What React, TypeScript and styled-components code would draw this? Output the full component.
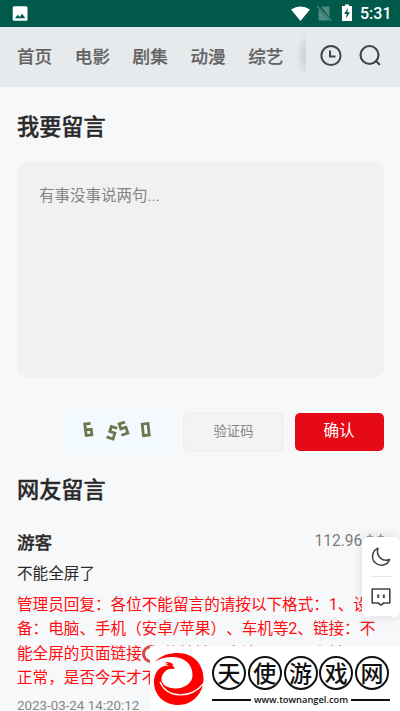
import React from "react";
import styled, { createGlobalStyle } from "styled-components";

const GlobalStyle = createGlobalStyle`
  * { box-sizing: border-box; }
  body { margin: 0; background: #f7f8fa; overflow: hidden; }
  button, textarea, input { font: inherit; }
`;

const Screen = styled.div`
  position: relative;
  width: 400px;
  height: 711px;
  overflow: hidden;
  background: #f7f8fa;
  color: #292929;
  font-family: Roboto, "Noto Sans CJK SC", sans-serif;
  text-spacing-trim: space-all;
`;

const StatusBar = styled.header`
  display: flex;
  align-items: center;
  height: 27px;
  padding: 0 9px 0 12px;
  background: #00594b;
  color: #fff;
`;

const StatusIcons = styled.div`
  display: flex;
  align-items: center;
  margin-left: auto;
  svg { display: block; }
`;

const Clock = styled.span`
  width: 31px;
  margin-left: 7px;
  font-size: 16px;
  font-weight: 500;
  line-height: 28px;
  white-space: nowrap;
`;

const NavBar = styled.nav`
  display: flex;
  align-items: center;
  height: 60px;
  padding-left: 17px;
  background: #e7eaed;
`;

const NavList = styled.div`
  display: flex;
  gap: 22.6px;
  width: 289px;
  height: 60px;
  overflow: hidden;
  background: radial-gradient(ellipse 10px 22px at 289px 28px, #cbced1, #e7eaed00) no-repeat;
`;

const NavItem = styled.a`
  flex: none;
  color: #626262;
  font-family: "Noto Sans CJK SC", sans-serif;
  font-size: 17.6px;
  font-weight: 500;
  line-height: 57px;
  white-space: nowrap;
  -webkit-text-stroke: 0.2px #626262;
`;

const NavTools = styled.div`
  display: flex;
  gap: 15px;
  margin: -4px 0 0 13px;
  svg { display: block; }
`;

const Content = styled.main`
  padding: 0 16px 0 17px;
`;

const Heading = styled.h2<{ $top: number }>`
  margin: ${(p) => p.$top}px 0 0;
  font-size: 22.2px;
  line-height: 32px;
  font-weight: 500;
  -webkit-text-stroke: 0.35px #292929;
`;

const MessageBox = styled.textarea`
  display: block;
  width: 367px;
  height: 215px;
  margin-top: 19px;
  padding: 22px 22px;
  border: 0;
  border-radius: 9px;
  resize: none;
  background: #f1f1f1;
  font-size: 15.5px;
  line-height: 24px;
  &::placeholder { color: #858585; }
`;

const FormRow = styled.div`
  display: flex;
  justify-content: flex-end;
  align-items: center;
  height: 40px;
  margin-top: 35px;
`;

const Captcha = styled.svg`
  width: 109px;
  height: 39px;
  background: #f2faff;
`;

const CodeInput = styled.input`
  width: 101px;
  height: 40px;
  margin: 0 11px;
  padding: 0 0 1px;
  border: 1px solid #eeeff0;
  border-radius: 6px;
  background: #f3f3f3;
  font-size: 13.3px;
  text-align: center;
  &::placeholder { color: #858585; }
`;

const Submit = styled.button`
  width: 89px;
  height: 38px;
  padding: 0 1px 6px 0;
  border: 0;
  border-radius: 5px;
  background: #e50a16;
  color: #fff;
  font-size: 15.6px;
`;

const CommentHead = styled.div`
  display: flex;
  justify-content: space-between;
  height: 26px;
  margin-top: 25px;
`;

const Author = styled.strong`
  font-size: 17.6px;
  line-height: 24px;
  font-weight: 500;
  -webkit-text-stroke: 0.3px #292929;
`;

const Address = styled.span`
  color: #7d7d7d;
  font-size: 15.6px;
  line-height: 20px;
`;

const CommentText = styled.p`
  margin: 5px 0 0;
  font-size: 15.6px;
  line-height: 25px;
`;

const Reply = styled.div`
  margin-top: 6px;
  color: #ff0b10;
  font-size: 15.6px;
  line-height: 24.4px;
`;

const ReplyLine = styled.div`
  display: flex;
  align-items: center;
  height: 24.4px;
  white-space: pre;
`;

const Ring = styled.i`
  flex: none;
  width: 18px;
  height: 18px;
  border: 3px solid #d94843;
  border-radius: 50%;
`;

const DateText = styled.time`
  display: block;
  margin-top: 5px;
  color: #858585;
  font-size: 13.35px;
  line-height: 20px;
`;

const FloatingTools = styled.aside`
  position: absolute;
  top: 537px;
  right: 0;
  display: flex;
  flex-direction: column;
  align-items: center;
  width: 38px;
  height: 80px;
  border-radius: 6px;
  background: #fff;
  box-shadow: 0 0 12px #0000001f;
`;

const ToolButton = styled.div`
  display: grid;
  place-items: center;
  width: 22px;
  height: 40px;
  border-bottom: 1px solid #e9e9e9;
`;

const SiteBadge = styled.footer`
  position: absolute;
  right: 0;
  bottom: 0;
  display: flex;
  width: 250px;
  height: 65px;
  padding: 6px 9px 0 3px;
  background: #fff;
  color: #111;
`;

const BirdLogo = styled.svg`
  flex: none;
  width: 52px;
  height: 54px;
`;

const BadgeBody = styled.div`
  width: 178px;
  margin-left: 7px;
`;

const BadgeName = styled.div`
  display: flex;
  justify-content: space-between;
  margin: 4px 1px 0 0;
`;

const RoundGlyph = styled.span`
  display: flex;
  justify-content: center;
  width: 34px;
  height: 34px;
  border: 2px solid #111;
  border-radius: 50%;
  font-family: "Noto Sans CJK SC", sans-serif;
  font-size: 23px;
  font-weight: 500;
  line-height: 28px;
`;

const BadgeUrl = styled.div`
  display: flex;
  align-items: center;
  justify-content: space-between;
  height: 16px;
  margin-top: 2px;
  font: 600 9.3px/16px "Open Sans", sans-serif;
  white-space: nowrap;
  &::before, &::after {
    content: "";
    width: 39px;
    height: 2px;
    background: #111;
  }
`;

const navigation = ["首页", "电影", "剧集", "动漫", "综艺"];

export default function App() {
  return (
    <Screen>
      <GlobalStyle />
      <StatusBar>
        <svg width="16" height="16" viewBox="0 0 16 16">
          <rect x=".7" y=".3" width="14.8" height="14.5" rx="1.5" fill="#fff" />
          <path d="M3 12.3 5.7 8.7l2 2.3 2.4-3.3 3.2 4.6z" fill="#00594b" />
        </svg>
        <StatusIcons>
          <svg width="62" height="19" viewBox="0 0 62 19" fill="#fff">
            <path d="M0 5.6Q9.5-.8 19 5.6L9.5 17z" />
            <path d="M30 2.500H38.500V13zM27.600 5.500l11 11H27.600z" fill="#4f8a80" />
            <path d="m26.5 2.5 13.7 14.2" stroke="#4f8a80" strokeWidth="1.3" />
            <path d="M51 2h3V.5h4V2h3v15H51z" />
            <path d="m57 3.8-3.8 6.1h2.5l-.7 4.7 4-6.4h-2.6z" fill="#00594b" />
          </svg>
          <Clock>5:31</Clock>
        </StatusIcons>
      </StatusBar>

      <NavBar>
        <NavList>{navigation.map((item) => <NavItem key={item}>{item}</NavItem>)}</NavList>
        <NavTools>
          <svg width="24" height="24" viewBox="0 0 24 24" fill="none" stroke="#444" strokeWidth="2">
            <circle cx="12" cy="12.5" r="9.6" />
            <path d="M11 7.5v6h5.5" />
          </svg>
          <svg width="24" height="24" viewBox="0 0 24 24" fill="none" stroke="#444" strokeWidth="2.1">
            <circle cx="11.5" cy="12" r="9" />
            <path d="m18 18 3.3 3.3" strokeLinecap="round" />
          </svg>
        </NavTools>
      </NavBar>

      <Content>
        <Heading $top={24}>我要留言</Heading>
        <MessageBox placeholder="有事没事说两句..." />
        <FormRow>
          <Captcha viewBox="0 0 109 39" fill="none" stroke="#70744f" strokeWidth="2.8">
            <path transform="translate(20 10) rotate(-7)" d="M7.5 1.2H1.6v11.6h5.8V7.2H1.6" />
            <path transform="translate(46.5 11.5) rotate(18)" d="M8.5 1.3H2.4v5.2h5.4v6.2H1" />
            <path transform="translate(53.5 10.5) rotate(-18)" d="M8.5 1.3H2.4v5.2h5.4v6.2H1" />
            <path transform="translate(77.5 10) rotate(-6)" d="M1.6 1.3h5.8v11.6H1.6z" />
          </Captcha>
          <CodeInput placeholder="验证码" />
          <Submit>确认</Submit>
        </FormRow>

        <Heading $top={22}>网友留言</Heading>
        <CommentHead>
          <Author>游客</Author>
          <Address>112.96.*.*</Address>
        </CommentHead>
        <CommentText>不能全屏了</CommentText>
        <Reply>
          <ReplyLine>管理员回复：各位不能留言的请按以下格式：1、设</ReplyLine>
          <ReplyLine>备：电脑、手机（安卓/苹果）、车机等2、链接：不</ReplyLine>
          <ReplyLine>能全屏的页面链接<Ring /> 的地址，方法是否3、之前是</ReplyLine>
          <ReplyLine>正常，是否今天才不能全屏</ReplyLine>
        </Reply>
        <DateText>2023-03-24 14:20:12</DateText>
      </Content>

      <FloatingTools>
        <ToolButton>
          <svg width="20" height="20" viewBox="0 0 20 20" fill="none" stroke="#444" strokeWidth="1.5" strokeLinejoin="round">
            <path d="M7 1.3A8.8 8.8 0 1 0 18.6 12.5C11.5 15.5 4.5 9 7 1.3Z" />
          </svg>
        </ToolButton>
        <ToolButton>
          <svg width="20" height="20" viewBox="0 0 20 20" fill="none" stroke="#444" strokeWidth="1.6" strokeLinejoin="round">
            <path d="M1.2 2h17.6v14h-6L10 18.2 7.2 16h-6z" />
            <path d="M7.2 7.5v3.6M12.8 7.5v3.6" strokeWidth="2" />
          </svg>
        </ToolButton>
      </FloatingTools>

      <SiteBadge>
        <BirdLogo viewBox="0 0 52 54">
          <path fill="#f00" d="M2 9.500C9 3 16 1 25 1c15 0 25.500 11 25.500 25.500C50.500 42 39 53 25.500 53 11 53 1 43 1 30c0-8 4-14 10-16l5-.5-4.500-1.800 4 .1L12 10c4-.3 7.500.8 8.500 3.300l-2 .2c2 .8 3 1.500 3 3.500C14.500 15.500 8.500 21 8.500 27c0 6 6.500 9.500 14 9.500C32 36.500 39.500 31 39.500 23 39.500 12 31 5.500 21 5 14 4.700 8 6 2 9.500Z" />
          <path d="M7 30C14 46 37 48 51 31" fill="none" stroke="#fff" strokeWidth="1.3" />
        </BirdLogo>
        <BadgeBody>
          <BadgeName>
            {["天", "使", "游", "戏", "网"].map((c) => <RoundGlyph key={c}>{c}</RoundGlyph>)}
          </BadgeName>
          <BadgeUrl>www.townangel.com</BadgeUrl>
        </BadgeBody>
      </SiteBadge>
    </Screen>
  );
}
